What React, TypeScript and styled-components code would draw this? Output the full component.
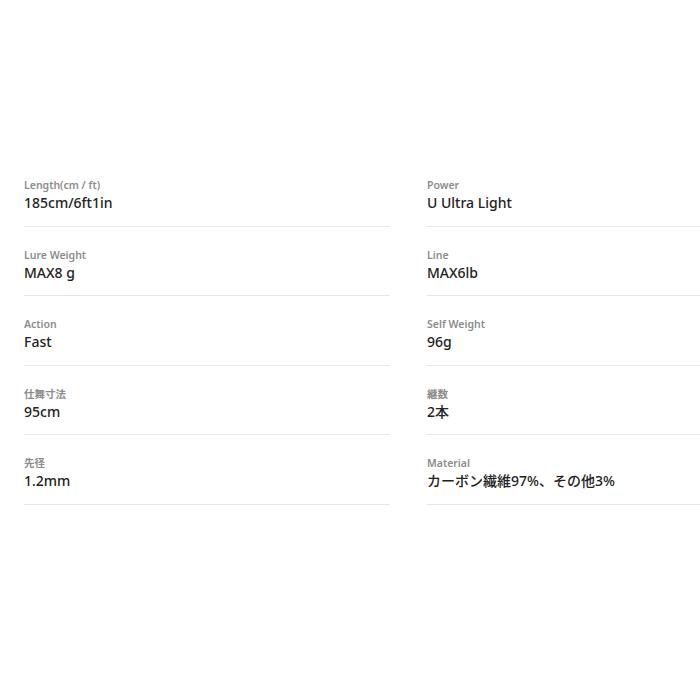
import React from 'react'
import styled, {createGlobalStyle} from 'styled-components'

const GlobalStyle = createGlobalStyle`
  html, body {
    margin: 0;
    padding: 0;
    background: #fff;
    overflow: hidden;
  }
  body {
    font-family: "Noto Sans", "Noto Sans CJK JP", sans-serif;
  }
`

const specs = [
    {label: 'Length(cm / ft)', value: '185cm/6ft1in'},
    {label: 'Power', value: 'U Ultra Light'},
    {label: 'Lure Weight', value: 'MAX8 g'},
    {label: 'Line', value: 'MAX6lb'},
    {label: 'Action', value: 'Fast'},
    {label: 'Self Weight', value: '96g'},
    {label: '仕舞寸法', value: '95cm'},
    {label: '継数', value: '2本'},
    {label: '先径', value: '1.2mm'},
    {label: 'Material', value: 'カーボン繊維97%、その他3%'},
]

const Page = styled.div`
  width: 900px;
  padding: 178px 0 0 24px;
`

const SpecGrid = styled.dl`
  display: grid;
  grid-template-columns: 366px 366px;
  column-gap: 37px;
  margin: 0;
`

const SpecItem = styled.div`
  padding-bottom: 12.5px;
  margin-bottom: 21px;
  border-bottom: 1px solid #e6e6e6;
`

const SpecLabel = styled.dt`
  font-size: 10.5px;
  line-height: 15px;
  font-weight: 600;
  color: #8c8c8c;
`

const SpecValue = styled.dd`
  margin: 0;
  font-size: 14px;
  line-height: 20px;
  font-weight: 500;
  color: #222;
`

export default function App() {
    return <Page>
        <GlobalStyle/>
        <SpecGrid>
            {specs.map(s => <SpecItem key={s.label}>
                <SpecLabel>{s.label}</SpecLabel>
                <SpecValue>{s.value}</SpecValue>
            </SpecItem>)}
        </SpecGrid>
    </Page>
}
